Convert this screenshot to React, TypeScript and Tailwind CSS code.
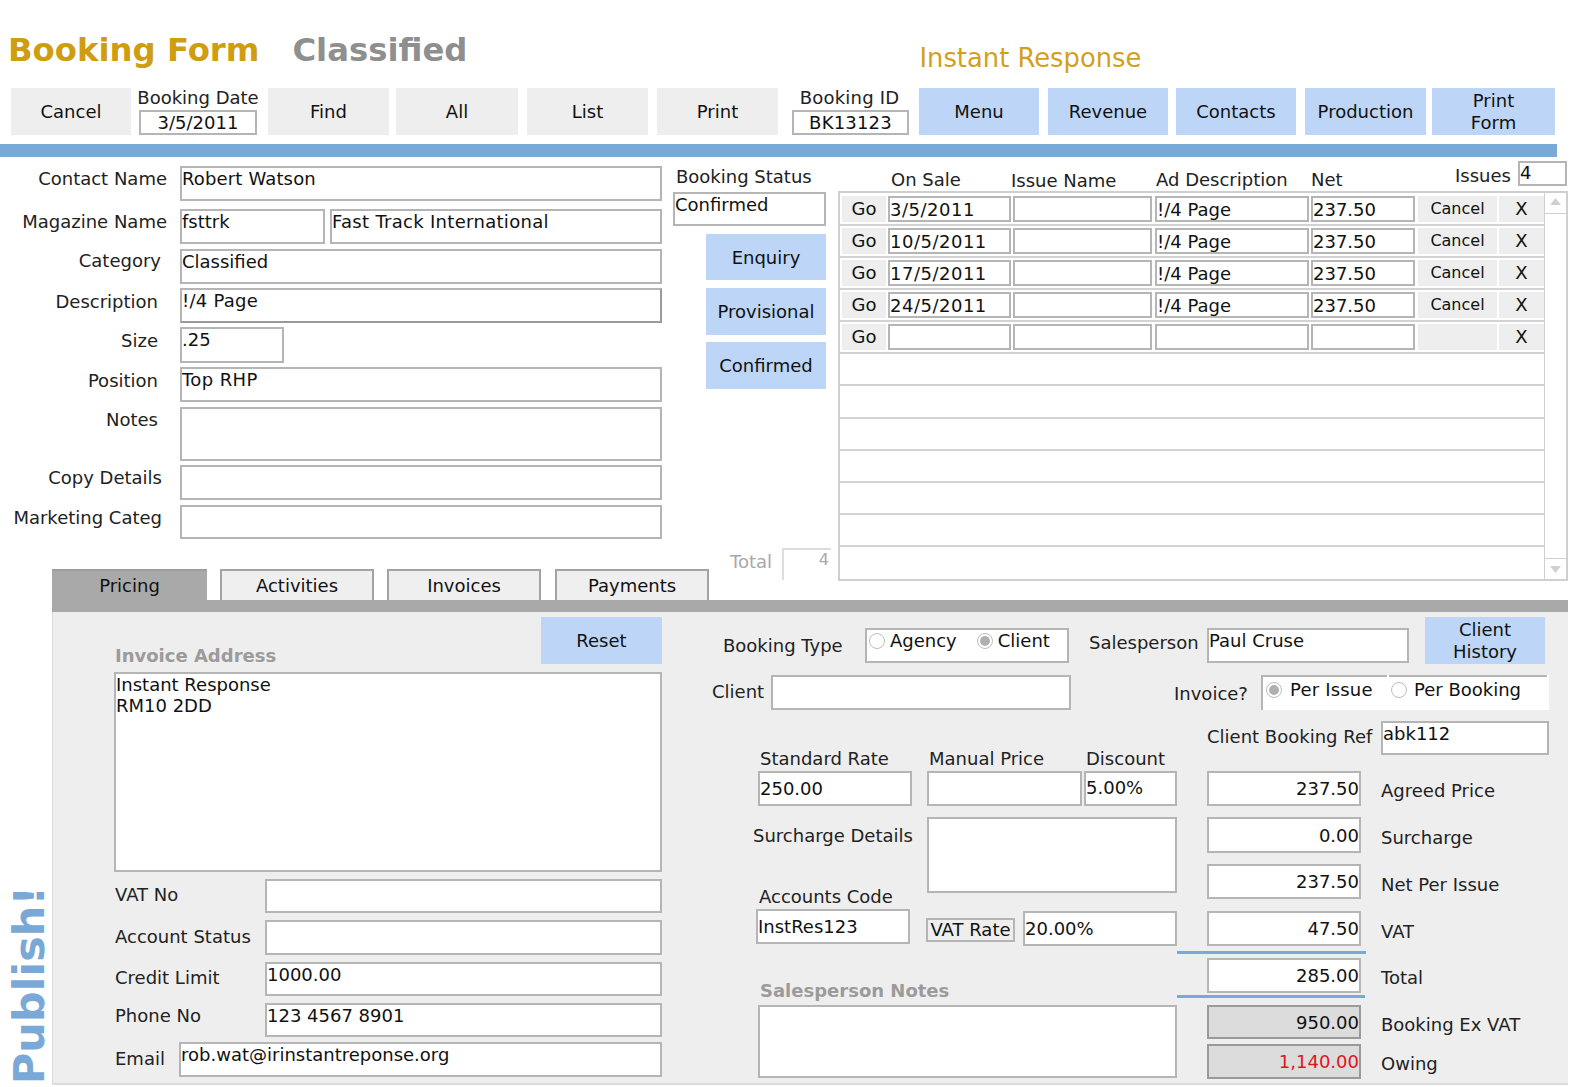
import React from "react";

const fieldBase = "box-border border-2 border-[#b5b5b5] bg-white text-[#111] leading-[22px] overflow-hidden whitespace-pre";

function F({ className = "", children }: { className?: string; children?: React.ReactNode }) {
  return <div className={fieldBase + " " + className}>{children}</div>;
}

function Btn({ className = "", children }: { className?: string; children?: React.ReactNode }) {
  return <div className={"shrink-0 flex items-center justify-center text-center leading-[22px] text-[#111] " + className}>{children}</div>;
}

function Label({ className = "", children }: { className?: string; children?: React.ReactNode }) {
  return <div className={"shrink-0 leading-[22px] whitespace-nowrap text-[#222] " + className}>{children}</div>;
}

function Radio({ on = false, className = "" }: { on?: boolean; className?: string }) {
  return (
    <span className={"box-border w-[16px] h-[16px] shrink-0 rounded-full border border-[#bdbdbd] bg-white flex items-center justify-center " + className}>
      {on && <span className="w-[10px] h-[10px] rounded-full bg-[#b0b0b0]" />}
    </span>
  );
}

type Row = { date?: string; ad?: string; net?: string; cancel?: boolean };
const rows: Row[] = [
  { date: "3/5/2011", ad: "!/4 Page", net: "237.50", cancel: true },
  { date: "10/5/2011", ad: "!/4 Page", net: "237.50", cancel: true },
  { date: "17/5/2011", ad: "!/4 Page", net: "237.50", cancel: true },
  { date: "24/5/2011", ad: "!/4 Page", net: "237.50", cancel: true },
  {},
];

function PortalRow({ r }: { r: Row }) {
  return (
    <div className="box-border flex items-center border-b-2 border-[#d2d2d2] pl-[2px]">
      <Btn className="w-[44px] h-[26px] bg-[#eeeeee]">Go</Btn>
      <F className="ml-[2px] w-[123px] h-[26px] !leading-[24px] tracking-[0.5px]">{r.date}</F>
      <F className="ml-[2px] w-[139px] h-[26px] !leading-[24px]"></F>
      <F className="ml-[3px] w-[154px] h-[26px] !leading-[24px]">{r.ad}</F>
      <F className="ml-[2px] w-[104px] h-[26px] !leading-[24px]">{r.net}</F>
      <Btn className="ml-[3px] w-[79px] h-[26px] bg-[#eeeeee] text-[16px]">{r.cancel ? "Cancel" : ""}</Btn>
      <Btn className="ml-[2px] w-[45px] h-[26px] bg-[#eeeeee]">X</Btn>
    </div>
  );
}

function PriceRow({ value, label, className = "", grey = false, red = false, labelClass = "mt-[9px]", valueClass = "pt-[5px]" }: { value: string; label: string; className?: string; grey?: boolean; red?: boolean; labelClass?: string; valueClass?: string }) {
  return (
    <div className={"flex shrink-0 " + className}>
      <F className={"w-[154px] h-full text-right " + valueClass + " " + (grey ? "!bg-[#dcdcdc] !border-[#9a9a9a] " : "") + (red ? "!text-[#e0141c]" : "")}>{value}</F>
      <Label className={"ml-[20px] " + labelClass}>{label}</Label>
    </div>
  );
}

export default function App() {
  return (
    <div className="w-[1588px] h-[1087px] bg-white overflow-hidden font-['DejaVu_Sans',sans-serif] text-[18px]">
      {/* Title */}
      <div className="h-[88px] flex items-start">
        <div className="ml-[8px] mt-[28px] text-[32.3px] leading-[44px] font-bold text-[#cf9d10]">Booking Form</div>
        <div className="ml-[33px] mt-[28px] text-[32.3px] leading-[44px] font-bold text-[#8f8f8f]">Classified</div>
        <div className="ml-[452px] mt-[40px] text-[25.8px] leading-[36px] text-[#d3a01a]">Instant Response</div>
      </div>

      {/* Toolbar */}
      <div className="flex h-[47px]">
        <Btn className="ml-[11px] w-[120px] bg-[#eeeeee] pt-[1px]">Cancel</Btn>
        <div className="ml-[8px] w-[118px] flex flex-col items-center">
          <Label className="h-[22px] -mt-[1px]">Booking Date</Label>
          <F className="w-full h-[25px] mt-[1px] text-center !leading-[22px]">3/5/2011</F>
        </div>
        <Btn className="ml-[11px] w-[121px] bg-[#eeeeee] pt-[1px]">Find</Btn>
        <Btn className="ml-[7px] w-[122px] bg-[#eeeeee] pt-[1px]">All</Btn>
        <Btn className="ml-[9px] w-[121px] bg-[#eeeeee] pt-[1px]">List</Btn>
        <Btn className="ml-[9px] w-[121px] bg-[#eeeeee] pt-[1px]">Print</Btn>
        <div className="ml-[14px] w-[117px] flex flex-col items-center">
          <Label className="h-[22px] -mt-[1px] -ml-[2px] tracking-[0.2px]">Booking ID</Label>
          <F className="w-full h-[25px] mt-[1px] text-center !leading-[22px] tracking-[0.2px]">BK13123</F>
        </div>
        <Btn className="ml-[10px] w-[120px] bg-[#bdd6f7] pt-[1px]">Menu</Btn>
        <Btn className="ml-[9px] w-[120px] bg-[#bdd6f7] pt-[1px]">Revenue</Btn>
        <Btn className="ml-[8px] w-[120px] bg-[#bdd6f7] pt-[1px]">Contacts</Btn>
        <Btn className="ml-[9px] w-[121px] bg-[#bdd6f7] pt-[1px]">Production</Btn>
        <Btn className="ml-[6px] w-[123px] bg-[#bdd6f7] pt-[1px]">Print<br />Form</Btn>
      </div>

      <div className="mt-[9px] h-[13px] w-[1557px] bg-[#7ba9d7]" />

      {/* Upper section */}
      <div className="flex h-[412px]">
        {/* Left column */}
        <div className="w-[662px] pt-[9px]">
          <div className="flex h-[35px]">
            <Label className="w-[167px] text-right pt-[2px]">Contact Name</Label>
            <F className="ml-[13px] w-[482px] tracking-[0.15px]">Robert Watson</F>
          </div>
          <div className="flex h-[35px] mt-[8px]">
            <Label className="w-[167px] text-right pt-[2px]">Magazine Name</Label>
            <F className="ml-[13px] w-[145px]">fsttrk</F>
            <F className="ml-[5px] w-[332px] tracking-[0.3px]">Fast Track International</F>
          </div>
          <div className="flex h-[35px] mt-[5px]">
            <Label className="w-[161px] text-right pt-[1px]">Category</Label>
            <F className="ml-[19px] w-[482px]">Classified</F>
          </div>
          <div className="flex h-[35px] mt-[4px]">
            <Label className="w-[158px] text-right pt-[3px]">Description</Label>
            <F className="ml-[22px] w-[482px] tracking-[0.25px] !border-r-[#9a9a9a] !border-b-[#9a9a9a]">!/4 Page</F>
          </div>
          <div className="flex h-[36px] mt-[4px]">
            <Label className="w-[158px] text-right pt-[3px]">Size</Label>
            <F className="ml-[22px] w-[104px]">.25</F>
          </div>
          <div className="flex h-[35px] mt-[4px]">
            <Label className="w-[158px] text-right pt-[3px]">Position</Label>
            <F className="ml-[22px] w-[482px] tracking-[0.4px]">Top RHP</F>
          </div>
          <div className="flex h-[54px] mt-[5px]">
            <Label className="w-[158px] text-right pt-[2px]">Notes</Label>
            <F className="ml-[22px] w-[482px]"></F>
          </div>
          <div className="flex h-[35px] mt-[4px]">
            <Label className="w-[162px] text-right pt-[2px]">Copy Details</Label>
            <F className="ml-[18px] w-[482px]"></F>
          </div>
          <div className="flex h-[34px] mt-[5px]">
            <Label className="w-[162px] text-right pt-[2px]">Marketing Categ</Label>
            <F className="ml-[18px] w-[482px]"></F>
          </div>
        </div>

        {/* Middle column */}
        <div className="w-[176px] pl-[11px] flex flex-col">
          <Label className="mt-[9px] ml-[3px] h-[22px]">Booking Status</Label>
          <F className="shrink-0 mt-[4px] w-[153px] h-[34px]">Confirmed</F>
          <Btn className="mt-[8px] ml-[33px] w-[120px] h-[46px] bg-[#bdd6f7] pt-[1px]">Enquiry</Btn>
          <Btn className="mt-[8px] ml-[33px] w-[120px] h-[47px] bg-[#bdd6f7]">Provisional</Btn>
          <Btn className="mt-[7px] ml-[33px] w-[120px] h-[47px] bg-[#bdd6f7]">Confirmed</Btn>
          <div className="shrink-0 mt-[159px] flex h-[32px]">
            <Label className="ml-[57px] w-[52px] pt-[3px] !text-[#a8a8a8]">Total</Label>
            <div className="box-border w-[49px] border-l-2 border-t-2 border-[#dddddd] text-right pr-[2px] text-[#a8a8a8] text-[16px] leading-[20px]">4</div>
          </div>
        </div>

        {/* Portal */}
        <div className="w-[730px] flex flex-col">
          <div className="shrink-0 flex h-[34px] items-start">
            <Label className="ml-[53px] w-[120px] mt-[12px]">On Sale</Label>
            <Label className="w-[145px] mt-[13px]">Issue Name</Label>
            <Label className="w-[155px] mt-[12px]">Ad Description</Label>
            <Label className="w-[144px] mt-[12px]">Net</Label>
            <Label className="w-[63px] mt-[8px]">Issues</Label>
            <F className="w-[49px] h-[25px] mt-[4px] !leading-[20px]">4</F>
          </div>
          <div className="shrink-0 box-border h-[390px] border-2 border-[#cfcfcf] flex">
            <div className="flex-1 grid grid-rows-12 border-r border-[#cfcfcf] pt-[1px]">
              {rows.map((r, i) => <PortalRow key={i} r={r} />)}
              {Array.from({ length: 6 }).map((_, i) => <div key={i} className="border-b-2 border-[#d2d2d2]" />)}
              <div />
            </div>
            <div className="w-[21px] flex flex-col justify-between">
              <div className="h-[21px] border-b border-[#cfcfcf] flex justify-center pt-[5px]">
                <svg width="11" height="7" viewBox="0 0 11 7"><path d="M5.5 0L11 7H0z" fill="#d0d0d0" /></svg>
              </div>
              <div className="h-[21px] border-t border-[#cfcfcf] flex justify-center pt-[7px]">
                <svg width="11" height="7" viewBox="0 0 11 7"><path d="M5.5 7L11 0H0z" fill="#d0d0d0" /></svg>
              </div>
            </div>
          </div>
        </div>
      </div>

      {/* Lower section */}
      <div className="flex">
        <div className="w-[52px] h-[518px] flex flex-col justify-end items-center pb-[3px] pl-[6px]">
          <div className="[writing-mode:vertical-rl] rotate-180 text-[43px] leading-[44px] font-bold text-[#7ba9d7] whitespace-nowrap">Publish!</div>
        </div>

        <div className="w-[1516px]">
          {/* Tabs */}
          <div className="flex h-[31px]">
            <Btn className="box-border w-[155px] bg-[#a9a9a9] border-t-2 border-[#9d9d9d] pt-[1px]">Pricing</Btn>
            <Btn className="box-border ml-[13px] w-[154px] bg-[#efefef] border-2 border-b-0 border-[#a3a3a3] pt-[1px]">Activities</Btn>
            <Btn className="box-border ml-[13px] w-[154px] bg-[#efefef] border-2 border-b-0 border-[#a3a3a3] pt-[1px]">Invoices</Btn>
            <Btn className="box-border ml-[14px] w-[154px] bg-[#efefef] border-2 border-b-0 border-[#a3a3a3] pt-[1px]">Payments</Btn>
          </div>
          <div className="h-[12px] bg-[#a9a9a9]" />

          {/* Panel */}
          <div className="box-border h-[473px] bg-[#eeeeee] border-l border-b-2 border-[#dcdcdc] flex">
            {/* Left */}
            <div className="ml-[61px] w-[548px] flex flex-col">
              <div className="flex h-[60px] justify-between">
                <div className="mt-[33px] ml-[1px] leading-[22px] font-bold text-[#9b9b9b]">Invoice Address</div>
                <Btn className="mt-[5px] w-[121px] h-[47px] bg-[#bdd6f7] pt-[1px]">Reset</Btn>
              </div>
              <F className="h-[200px] !leading-[21px]">{"Instant Response\nRM10 2DD"}</F>
              <div className="flex h-[34px] mt-[7px]">
                <Label className="w-[150px] ml-[1px] pt-[5px]">VAT No</Label>
                <F className="w-[397px]"></F>
              </div>
              <div className="flex h-[35px] mt-[7px]">
                <Label className="w-[150px] ml-[1px] pt-[6px]">Account Status</Label>
                <F className="w-[397px]"></F>
              </div>
              <div className="flex h-[34px] mt-[7px]">
                <Label className="w-[150px] ml-[1px] pt-[5px]">Credit Limit</Label>
                <F className="w-[397px]">1000.00</F>
              </div>
              <div className="flex h-[34px] mt-[7px]">
                <Label className="w-[150px] ml-[1px] pt-[2px]">Phone No</Label>
                <F className="w-[397px]">123 4567 8901</F>
              </div>
              <div className="flex h-[35px] mt-[5px]">
                <Label className="w-[64px] ml-[1px] pt-[6px]">Email</Label>
                <F className="w-[483px]">rob.wat@irinstantreponse.org</F>
              </div>
            </div>

            {/* Right */}
            <div className="flex-1 flex flex-col">
              {/* Row A */}
              <div className="flex items-start h-[52px]">
                <Label className="ml-[61px] w-[142px] mt-[23px]">Booking Type</Label>
                <F className="mt-[16px] w-[204px] h-[35px] flex items-start">
                  <Radio className="ml-[2px] mt-[3px]" />
                  <span className="ml-[5px]">Agency</span>
                  <Radio on className="ml-[20px] mt-[3px]" />
                  <span className="ml-[5px]">Client</span>
                </F>
                <Label className="ml-[20px] w-[118px] mt-[20px]">Salesperson</Label>
                <F className="mt-[16px] w-[202px] h-[35px]">Paul Cruse</F>
                <Btn className="ml-[16px] mt-[5px] w-[120px] h-[47px] bg-[#bdd6f7] pt-[1px]">Client<br />History</Btn>
              </div>

              {/* Row B */}
              <div className="flex items-start h-[35px] mt-[11px]">
                <Label className="ml-[50px] w-[59px] mt-[6px]">Client</Label>
                <F className="w-[300px] h-[35px]"></F>
                <Label className="ml-[103px] w-[87px] mt-[8px]">Invoice?</Label>
                <div className="box-border w-[288px] h-[35px] bg-white border-l-2 border-[#b5b5b5] flex leading-[22px] text-[#111]">
                  <div className="w-[124px] border-t-2 border-[#b5b5b5] flex items-start pt-[2px]">
                    <Radio on className="ml-[3px] mt-[3px]" />
                    <span className="ml-[8px] tracking-[0.2px]">Per Issue</span>
                  </div>
                  <div className="ml-[2px] w-[158px] border-t-2 border-[#b5b5b5] flex items-start pt-[2px]">
                    <Radio className="ml-[2px] mt-[3px]" />
                    <span className="ml-[7px]">Per Booking</span>
                  </div>
                </div>
              </div>

              {/* Pricing area */}
              <div className="flex">
                <div className="ml-[91px] w-[454px] flex flex-col">
                  <div className="flex mt-[38px] h-[22px]">
                    <Label className="ml-[7px] w-[169px]">Standard Rate</Label>
                    <Label className="w-[157px]">Manual Price</Label>
                    <Label>Discount</Label>
                  </div>
                  <div className="flex mt-[1px] h-[35px]">
                    <F className="ml-[5px] w-[154px] pt-[5px]">250.00</F>
                    <F className="ml-[15px] w-[155px]"></F>
                    <F className="ml-[2px] w-[93px] pt-[4px]">5.00%</F>
                  </div>
                  <div className="flex mt-[11px]">
                    <div className="w-[173px] flex flex-col">
                      <Label className="mt-[8px]">Surcharge Details</Label>
                      <Label className="mt-[39px] ml-[6px]">Accounts Code</Label>
                      <F className="mt-[1px] ml-[3px] w-[154px] h-[35px] pt-[5px]">InstRes123</F>
                    </div>
                    <div className="w-[251px] flex flex-col">
                      <F className="ml-[1px] w-[250px] h-[76px]"></F>
                      <div className="flex items-start mt-[18px]">
                        <div className="box-border mt-[7px] w-[89px] h-[24px] border-2 border-[#b5b5b5] leading-[20px] text-center text-[#111] whitespace-nowrap">VAT Rate</div>
                        <F className="ml-[8px] w-[154px] h-[35px] pt-[5px]">20.00%</F>
                      </div>
                    </div>
                  </div>
                  <div className="mt-[34px] ml-[7px] leading-[22px] font-bold text-[#9b9b9b]">Salesperson Notes</div>
                  <F className="mt-[3px] ml-[5px] w-[419px] h-[73px]"></F>
                </div>

                <div className="flex flex-col">
                  <div className="flex h-[34px] mt-[11px]">
                    <Label className="w-[174px] mt-[5px]">Client Booking Ref</Label>
                    <F className="w-[168px]">abk112</F>
                  </div>
                  <PriceRow className="h-[35px] mt-[16px]" value="237.50" label="Agreed Price" />
                  <PriceRow className="h-[36px] mt-[11px]" value="0.00" label="Surcharge" labelClass="mt-[10px]" valueClass="pt-[6px]" />
                  <PriceRow className="h-[35px] mt-[11px]" value="237.50" label="Net Per Issue" labelClass="mt-[10px]" />
                  <PriceRow className="h-[35px] mt-[12px]" value="47.50" label="VAT" labelClass="mt-[10px]" />
                  <div className="shrink-0 mt-[5px] -ml-[30px] w-[189px] h-[3px] bg-[#7ba9d7]" />
                  <PriceRow className="h-[35px] mt-[4px]" value="285.00" label="Total" />
                  <div className="shrink-0 mt-[2px] -ml-[30px] w-[188px] h-[3px] bg-[#7ba9d7]" />
                  <PriceRow className="h-[34px] mt-[7px]" value="950.00" label="Booking Ex VAT" grey />
                  <PriceRow className="h-[35px] mt-[5px]" value="1,140.00" label="Owing" grey red />
                </div>
              </div>
            </div>
          </div>
        </div>
      </div>
    </div>
  );
}
